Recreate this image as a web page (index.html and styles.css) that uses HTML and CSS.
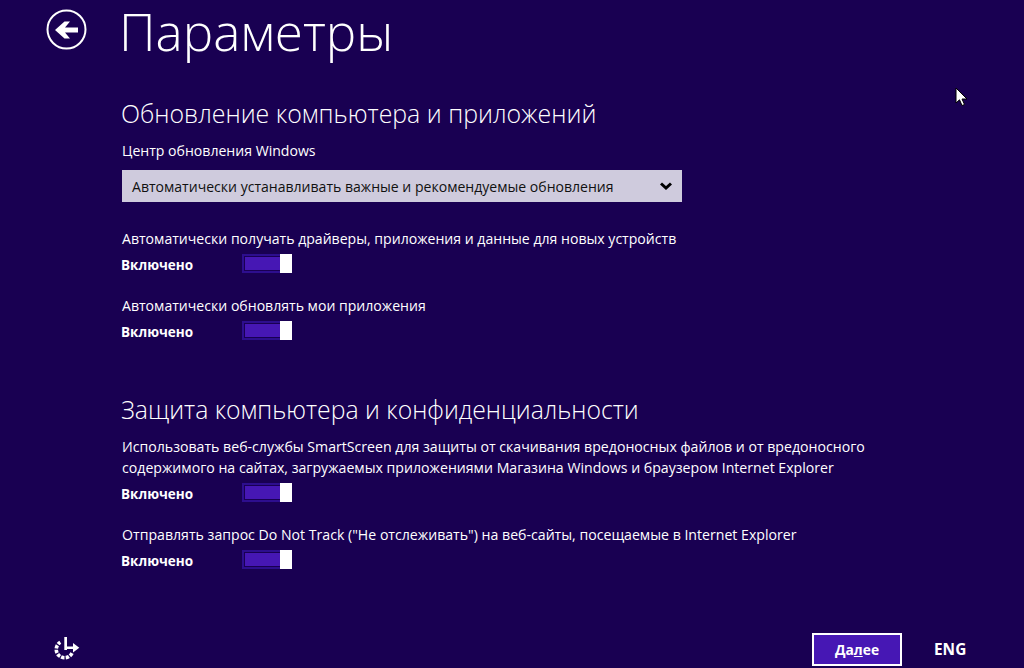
FILE: index.html
```html
<!DOCTYPE html>
<html lang="ru">
<head>
<meta charset="utf-8">
<title>Параметры</title>
<link rel="stylesheet" href="styles.css">
</head>
<body>
<div class="page">
  <header class="header">
    <svg class="back" width="42" height="42" viewBox="0 0 42 42"><circle cx="21.500" cy="20.500" r="19" fill="none" stroke="#fff" stroke-width="2"/><path d="M33 18.500H20L25 12.500h-5.500L10 21l9.500 8.500H25L20 23.500H33z" fill="#fff"/></svg>
    <h1 class="title">Параметры</h1>
  </header>
  <main class="content">
    <section class="section first">
      <h2 class="heading">Обновление компьютера и приложений</h2>
      <div class="label lead">Центр обновления Windows</div>
      <div class="select">
        <span>Автоматически устанавливать важные и рекомендуемые обновления</span>
        <svg width="12" height="8" viewBox="0 0 12 8"><path d="M1 1.500l5 4.500 5-4.500" fill="none" stroke="#000" stroke-width="3"/></svg>
      </div>
      <div class="option lead-option">
        <div class="label">Автоматически получать драйверы, приложения и данные для новых устройств</div>
        <div class="state"><b>Включено</b><span class="toggle"><i class="track"></i><i class="thumb"></i></span></div>
      </div>
      <div class="option">
        <div class="label">Автоматически обновлять мои приложения</div>
        <div class="state"><b>Включено</b><span class="toggle"><i class="track"></i><i class="thumb"></i></span></div>
      </div>
    </section>
    <section class="section second">
      <h2 class="heading">Защита компьютера и конфиденциальности</h2>
      <div class="option tight">
        <div class="label">Использовать веб-службы SmartScreen для защиты от скачивания вредоносных файлов и от вредоносного<br>содержимого на сайтах, загружаемых приложениями Магазина Windows и браузером Internet Explorer</div>
        <div class="state"><b>Включено</b><span class="toggle"><i class="track"></i><i class="thumb"></i></span></div>
      </div>
      <div class="option">
        <div class="label">Отправлять запрос Do Not Track ("Не отслеживать") на веб-сайты, посещаемые в Internet Explorer</div>
        <div class="state"><b>Включено</b><span class="toggle"><i class="track"></i><i class="thumb"></i></span></div>
      </div>
    </section>
  </main>
  <footer class="footer">
    <svg class="ease" width="28" height="26" viewBox="0 0 28 26"><path d="M19 16.100A8.300 8.300 0 1 1 7.300 5.300" fill="none" stroke="#fff" stroke-width="3.600" stroke-dasharray="3.400 1.200"/><path d="M11.300 0h2.700v13h-2.700z" fill="#fff"/><path d="M12 9.400h8V6l6.300 4.700-6.300 4.700V12h-8z" fill="#fff"/></svg>
    <button class="next">Да<u>л</u>ее</button>
    <span class="lang">ENG</span>
  </footer>
  <svg class="cursor" width="14" height="20" viewBox="0 0 14 20"><path d="M1 1v15l3.500-3.200L7 18.500l2.500-1L7 12h5z" fill="#fff" stroke="#000" stroke-width="1"/></svg>
</div>
</body>
</html>
```

FILE: styles.css
```css
* { box-sizing: border-box; }
html, body { margin: 0; height: 100%; }
body {
  background: #190052;
  color: #fff;
  font-family: "Open Sans", "Noto Sans", sans-serif;
  overflow: hidden;
}
.page {
  position: relative;
  width: 1024px;
  height: 668px;
  display: flex;
  flex-direction: column;
}
.header {
  display: flex;
  align-items: flex-start;
  height: 96px;
  padding-left: 45px;
}
.back { flex: none; margin-top: 9px; }
.title {
  margin: 1px 0 0 32px;
  font-size: 51.200px;
  font-weight: 300;
  line-height: 60px;
}
.content { padding-left: 122px; }
.heading {
  margin: 0 0 0 -1px;
  font-size: 24.900px;
  font-weight: 300;
  line-height: 34px;
}
.second { margin-top: 53px; }
.second .heading { font-size: 24.770px; }
.label {
  font-size: 14.080px;
  line-height: 21px;
}
.second .label { font-size: 14.140px; }
.lead { margin-top: 10px; }
.select {
  display: flex;
  align-items: center;
  justify-content: space-between;
  width: 560px;
  height: 32px;
  margin-top: 9px;
  padding: 0 10px;
  background: #cfcbdd;
  color: #111;
  font-size: 14.060px;
}
.option { margin-top: 22px; }
.lead-option { margin-top: 26px; }
.tight { margin-top: 9px; }
.state {
  display: flex;
  align-items: center;
  height: 19px;
  margin: 5px 0 0 -1px;
}
.state b {
  width: 121px;
  padding-top: 2px;
  font-size: 13.500px;
  font-weight: 700;
}
.toggle {
  display: flex;
  width: 50px;
  height: 19px;
}
.track {
  flex: 1;
  background: #4617b4;
  border: 2px solid #2d0e8e;
  border-right: 0;
  box-shadow: inset 1px 0 #190052, inset 0 1px #190052, inset 0 -1px #190052;
}
.thumb {
  width: 12px;
  background: #fff;
}
.footer {
  display: flex;
  align-items: center;
  margin-top: auto;
  height: 33px;
  margin-bottom: 2px;
  padding-left: 53px;
}
.ease { flex: none; margin-top: 1px; }
.next {
  width: 90px;
  height: 33px;
  margin-left: 731px;
  background: #4617b4;
  border: 2px solid #fff;
  color: #fff;
  font: 700 13.800px "Open Sans", sans-serif;
}
.lang {
  margin-left: 32px;
  font-size: 15.400px;
  font-weight: 700;
}
.cursor {
  position: absolute;
  left: 955px;
  top: 87px;
}
```
